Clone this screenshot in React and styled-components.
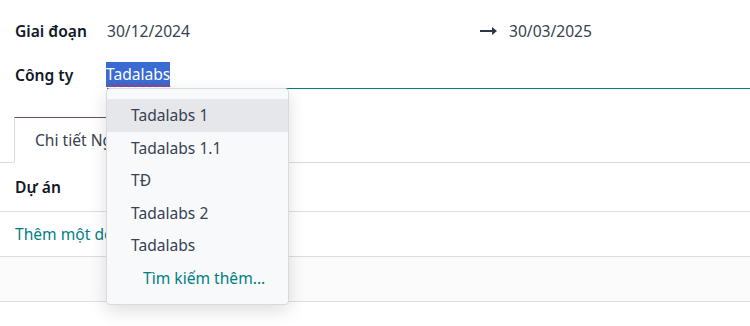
import styled, { createGlobalStyle } from "styled-components";

const GlobalStyle = createGlobalStyle`
  body {
    margin: 0;
    background: #fff;
    font-family: "Noto Sans", "Open Sans", sans-serif;
    font-size: 15.6px;
    color: #374151;
  }
`;

const Page = styled.div`
  position: relative;
  width: 750px;
  height: 326px;
  overflow: hidden;
`;

const Form = styled.div`
  padding: 14px 0 0 15px;
  display: flex;
  flex-direction: column;
  gap: 12px;
`;

const Row = styled.div`
  display: grid;
  grid-template-columns: 92px 1fr;
  align-items: center;
  height: ${(p) => p.h}px;
`;

const Label = styled.span`
  font-weight: 600;
  color: #111827;
`;

const DateRange = styled.div`
  display: flex;
  align-items: center;
`;

const DateValue = styled.span`
  width: ${(p) => p.w}px;
  color: #374151;
`;

const Arrow = styled.svg`
  width: 17px;
  height: 10px;
  margin-right: 12px;
`;

const InputWrap = styled.div`
  position: relative;
  height: 28px;
  display: flex;
  align-items: center;
  border-bottom: 1px solid #017e84;
`;

const Selected = styled.span`
  background: #3a6bd3;
  color: #fff;
  margin-left: -1px;
  padding: 1px 0 2px;
  text-decoration: underline wavy #e0203a;
  text-decoration-thickness: 1px;
  text-underline-offset: 3px;
`;

const Dropdown = styled.ul`
  position: absolute;
  top: 100%;
  left: -1px;
  width: 181px;
  margin: 0;
  padding: 10px 0 10px;
  list-style: none;
  background: #f8f9fb;
  border: 1px solid #d8dadd;
  border-radius: 4px;
  box-shadow: 0 6px 18px rgba(0, 0, 0, 0.13);
  z-index: 5;
`;

const Item = styled.li`
  height: 32.5px;
  display: flex;
  align-items: center;
  padding-left: ${(p) => (p.more ? 36 : 24)}px;
  background: ${(p) => (p.active ? "#e6e7ea" : "transparent")};
  color: ${(p) => (p.more ? "#017e84" : "#374151")};
`;

const TabBar = styled.div`
  margin-top: 28px;
  height: 45px;
  border-bottom: 1px solid #d8dadd;
  display: flex;
  align-items: flex-end;
`;

const Tab = styled.div`
  margin-left: 14px;
  margin-bottom: -1px;
  height: 44px;
  padding: 0 20px;
  display: flex;
  align-items: center;
  background: #fff;
  border: 1px solid #d8dadd;
  border-top-color: #714b67;
  border-bottom-color: #fff;
  color: #374151;
`;

const TableRow = styled.div`
  height: ${(p) => p.h}px;
  display: flex;
  align-items: center;
  padding-left: 15px;
  border-bottom: 1px solid #dcdde0;
  background: ${(p) => (p.muted ? "#fbfbfb" : "#fff")};
`;

const HeadCell = styled.span`
  font-weight: 600;
  color: #111827;
`;

const AddLink = styled.span`
  color: #017e84;
`;

const companies = ["Tadalabs 1", "Tadalabs 1.1", "TĐ", "Tadalabs 2", "Tadalabs"];

export default function App() {
  return (
    <Page>
      <GlobalStyle />
      <Form>
        <Row h={34}>
          <Label>Giai đoạn</Label>
          <DateRange>
            <DateValue w={373}>30/12/2024</DateValue>
            <Arrow viewBox="0 0 17 10">
              <path d="M0 4h12V1l5 4-5 4V6H0z" fill="#2d3748" />
            </Arrow>
            <DateValue>30/03/2025</DateValue>
          </DateRange>
        </Row>
        <Row h={29}>
          <Label>Công ty</Label>
          <InputWrap>
            <Selected>Tadalabs</Selected>
            <Dropdown>
              {companies.map((c, i) => (
                <Item key={c} active={i === 0}>
                  {c}
                </Item>
              ))}
              <Item more>Tìm kiếm thêm...</Item>
            </Dropdown>
          </InputWrap>
        </Row>
      </Form>
      <TabBar>
        <Tab>Chi tiết Ngân sách</Tab>
      </TabBar>
      <TableRow h={48}>
        <HeadCell>Dự án</HeadCell>
      </TableRow>
      <TableRow h={44}>
        <AddLink>Thêm một dòng</AddLink>
      </TableRow>
      <TableRow h={44} muted />
    </Page>
  );
}
